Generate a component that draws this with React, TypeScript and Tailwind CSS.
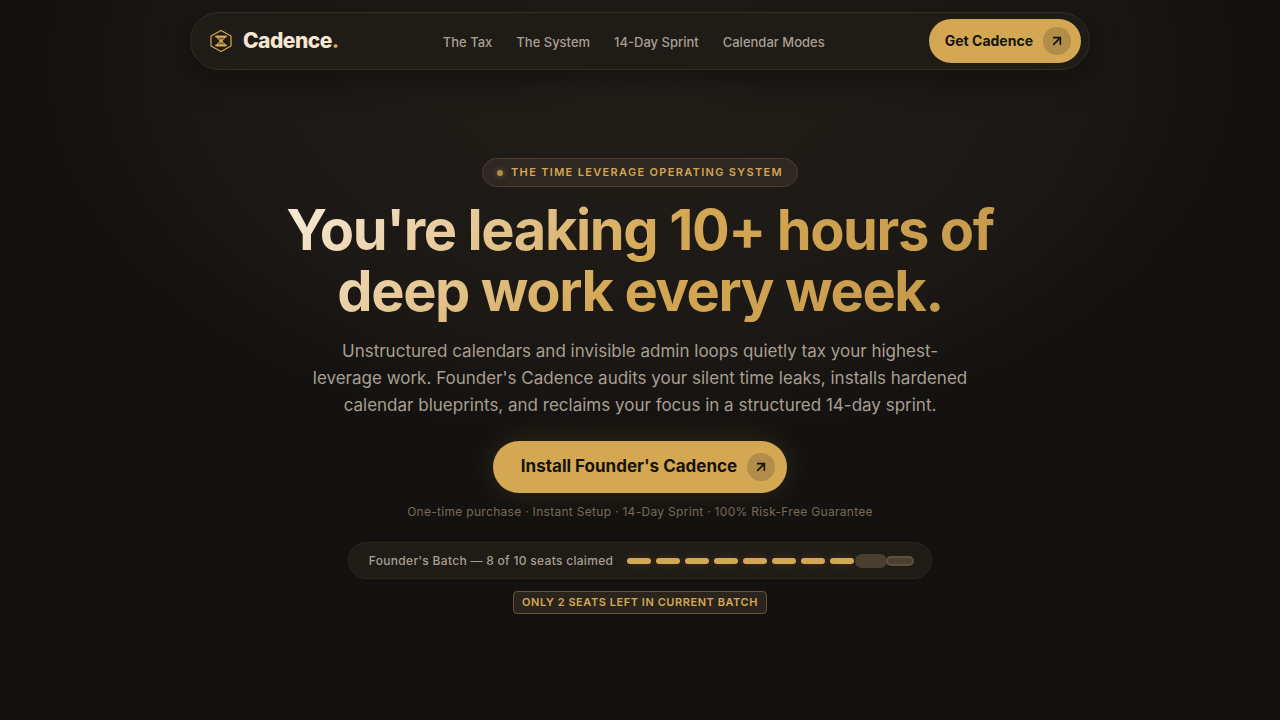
import { ArrowUpRight } from 'lucide-react';

interface NavLink {
    label: string;
    href: string;
}

const navLinks: NavLink[] = [
    { label: 'The Tax', href: '#tax' },
    { label: 'The System', href: '#system' },
    { label: '14-Day Sprint', href: '#sprint' },
    { label: 'Calendar Modes', href: '#modes' }
];

type SeatStatus = 'claimed' | 'pulsing' | 'open';

const seats: SeatStatus[] = [
    'claimed',
    'claimed',
    'claimed',
    'claimed',
    'claimed',
    'claimed',
    'claimed',
    'claimed',
    'pulsing',
    'open'
];

const getSeatStyle = (status: SeatStatus) => {
    switch (status) {
        case 'claimed':
            return 'bg-[#d4a853] shadow-[0_0_8px_rgba(212,168,83,0.2)]';
        case 'pulsing':
            return 'bg-[#4b4030] ring-4 ring-[#4b4030]';
        default:
            return 'bg-[#4b4030] ring-2 ring-[#5f503a]';
    }
};

function LogoMark() {
    return (
        <svg className="size-6" viewBox="0 0 24 24" fill="none" stroke="#d4a853" aria-hidden="true">
            <path d="M12 1.5 22 7v10l-10 5.5L2 17V7z" strokeWidth="1.2" strokeLinejoin="round" />
            <path d="M7 7.5h10M7 16.5h10" strokeWidth="1.8" strokeLinecap="round" />
            <path
                d="M8 8c0 2 2.5 3 4 4-1.5 1-4 2-4 4h8c0-2-2.5-3-4-4 1.5-1 4-2 4-4z"
                fill="#d4a853"
                fillOpacity="0.45"
                strokeWidth="1"
            />
            <circle cx="12" cy="12" r="1.8" fill="#d4a853" stroke="none" />
        </svg>
    );
}

function ArrowBadge() {
    return (
        <span className="flex size-7 items-center justify-center rounded-full bg-[#b08d49]">
            <ArrowUpRight className="size-4" strokeWidth={2.5} aria-hidden="true" />
        </span>
    );
}

function Header() {
    return (
        <header className="mx-auto flex w-full max-w-[900px] items-center justify-between rounded-full border border-[#342c23] bg-[#1f1b17] py-1.5 pr-2 pl-[18px] shadow-[0_8px_32px_rgba(0,0,0,0.4)]">
            <a href="#top" className="flex items-center gap-2.5">
                <LogoMark />
                <span className="text-[21px] font-extrabold tracking-tight text-[#f5e6d0]">
                    Cadence<span className="text-[#d4a853]">.</span>
                </span>
            </a>
            <nav className="flex gap-6 pt-1">
                {navLinks.map((link) => (
                    <a key={link.href} href={link.href} className="text-[13px] font-medium text-[#a89f91]">
                        {link.label}
                    </a>
                ))}
            </nav>
            <a
                href="#install"
                className="flex h-11 items-center gap-2.5 rounded-full bg-[#d4a853] pr-2.5 pl-4 text-sm font-bold text-[#141311]"
            >
                Get Cadence
                <ArrowBadge />
            </a>
        </header>
    );
}

function SeatTracker() {
    return (
        <div className="mt-[22px] flex h-[37px] items-center gap-[14px] rounded-full border border-[#2d261d] bg-[#1f1b17] pr-[19px] pl-5">
            <span className="text-xs font-medium tracking-wide text-[#a89f91]">
                Founder's Batch — 8 of 10 seats claimed
            </span>
            <div className="flex gap-[5px]">
                {seats.map((status, idx) => (
                    <span key={idx} className={`h-1.5 w-6 rounded-full ${getSeatStyle(status)}`} />
                ))}
            </div>
        </div>
    );
}

export default function App() {
    return (
        <div
            id="top"
            className="min-h-screen bg-[#131210] bg-[radial-gradient(ellipse_600px_380px_at_50%_70px,#211d18_0%,#1c1815_70%,#131210_100%)] px-6 pt-3 pb-12 font-['Inter',sans-serif]"
        >
            <Header />
            <main className="flex flex-col items-center pt-[88px] text-center">
                <div className="flex h-[29px] items-center gap-2 rounded-full border border-[#4b3e2a] bg-[#2f2721] px-3.5 text-[11px] font-semibold tracking-[0.12em] text-[#d4a853] uppercase">
                    <span className="size-1.5 rounded-full bg-[#b08d49] shadow-[0_0_6px_rgba(212,168,83,0.5)]" />
                    The Time Leverage Operating System
                </div>
                <h1 className="mt-[13px] max-w-[760px] bg-linear-135 from-[#f9efe0] via-[#d4a853] to-[#c1964a] bg-clip-text text-[56px] leading-[61px] font-bold tracking-tight text-transparent">
                    You're leaking 10+ hours of deep work every week.
                </h1>
                <p className="mt-4 max-w-[660px] text-[17px] leading-[27px] text-[#a89f91]">
                    Unstructured calendars and invisible admin loops quietly tax your highest-leverage work. Founder's
                    Cadence audits your silent time leaks, installs hardened calendar blueprints, and reclaims your
                    focus in a structured 14-day sprint.
                </p>
                <a
                    id="install"
                    href="#checkout"
                    className="mt-[22px] flex h-[52px] items-center gap-2.5 rounded-full bg-[#d4a853] pr-3 pl-7 text-[17px] font-bold text-[#141311] shadow-[0_0_32px_rgba(212,168,83,0.15)]"
                >
                    Install Founder's Cadence
                    <ArrowBadge />
                </a>
                <p className="mt-[11px] text-xs tracking-wide text-[#786a56]">
                    One-time purchase · Instant Setup · 14-Day Sprint · 100% Risk-Free Guarantee
                </p>
                <SeatTracker />
                <div className="mt-3 rounded-sm border border-[#655439] bg-[#2b241d] px-2 py-[3px] text-[11px] leading-[15px] font-semibold tracking-wider text-[#d4a853] uppercase">
                    Only 2 seats left in current batch
                </div>
            </main>
        </div>
    );
}
